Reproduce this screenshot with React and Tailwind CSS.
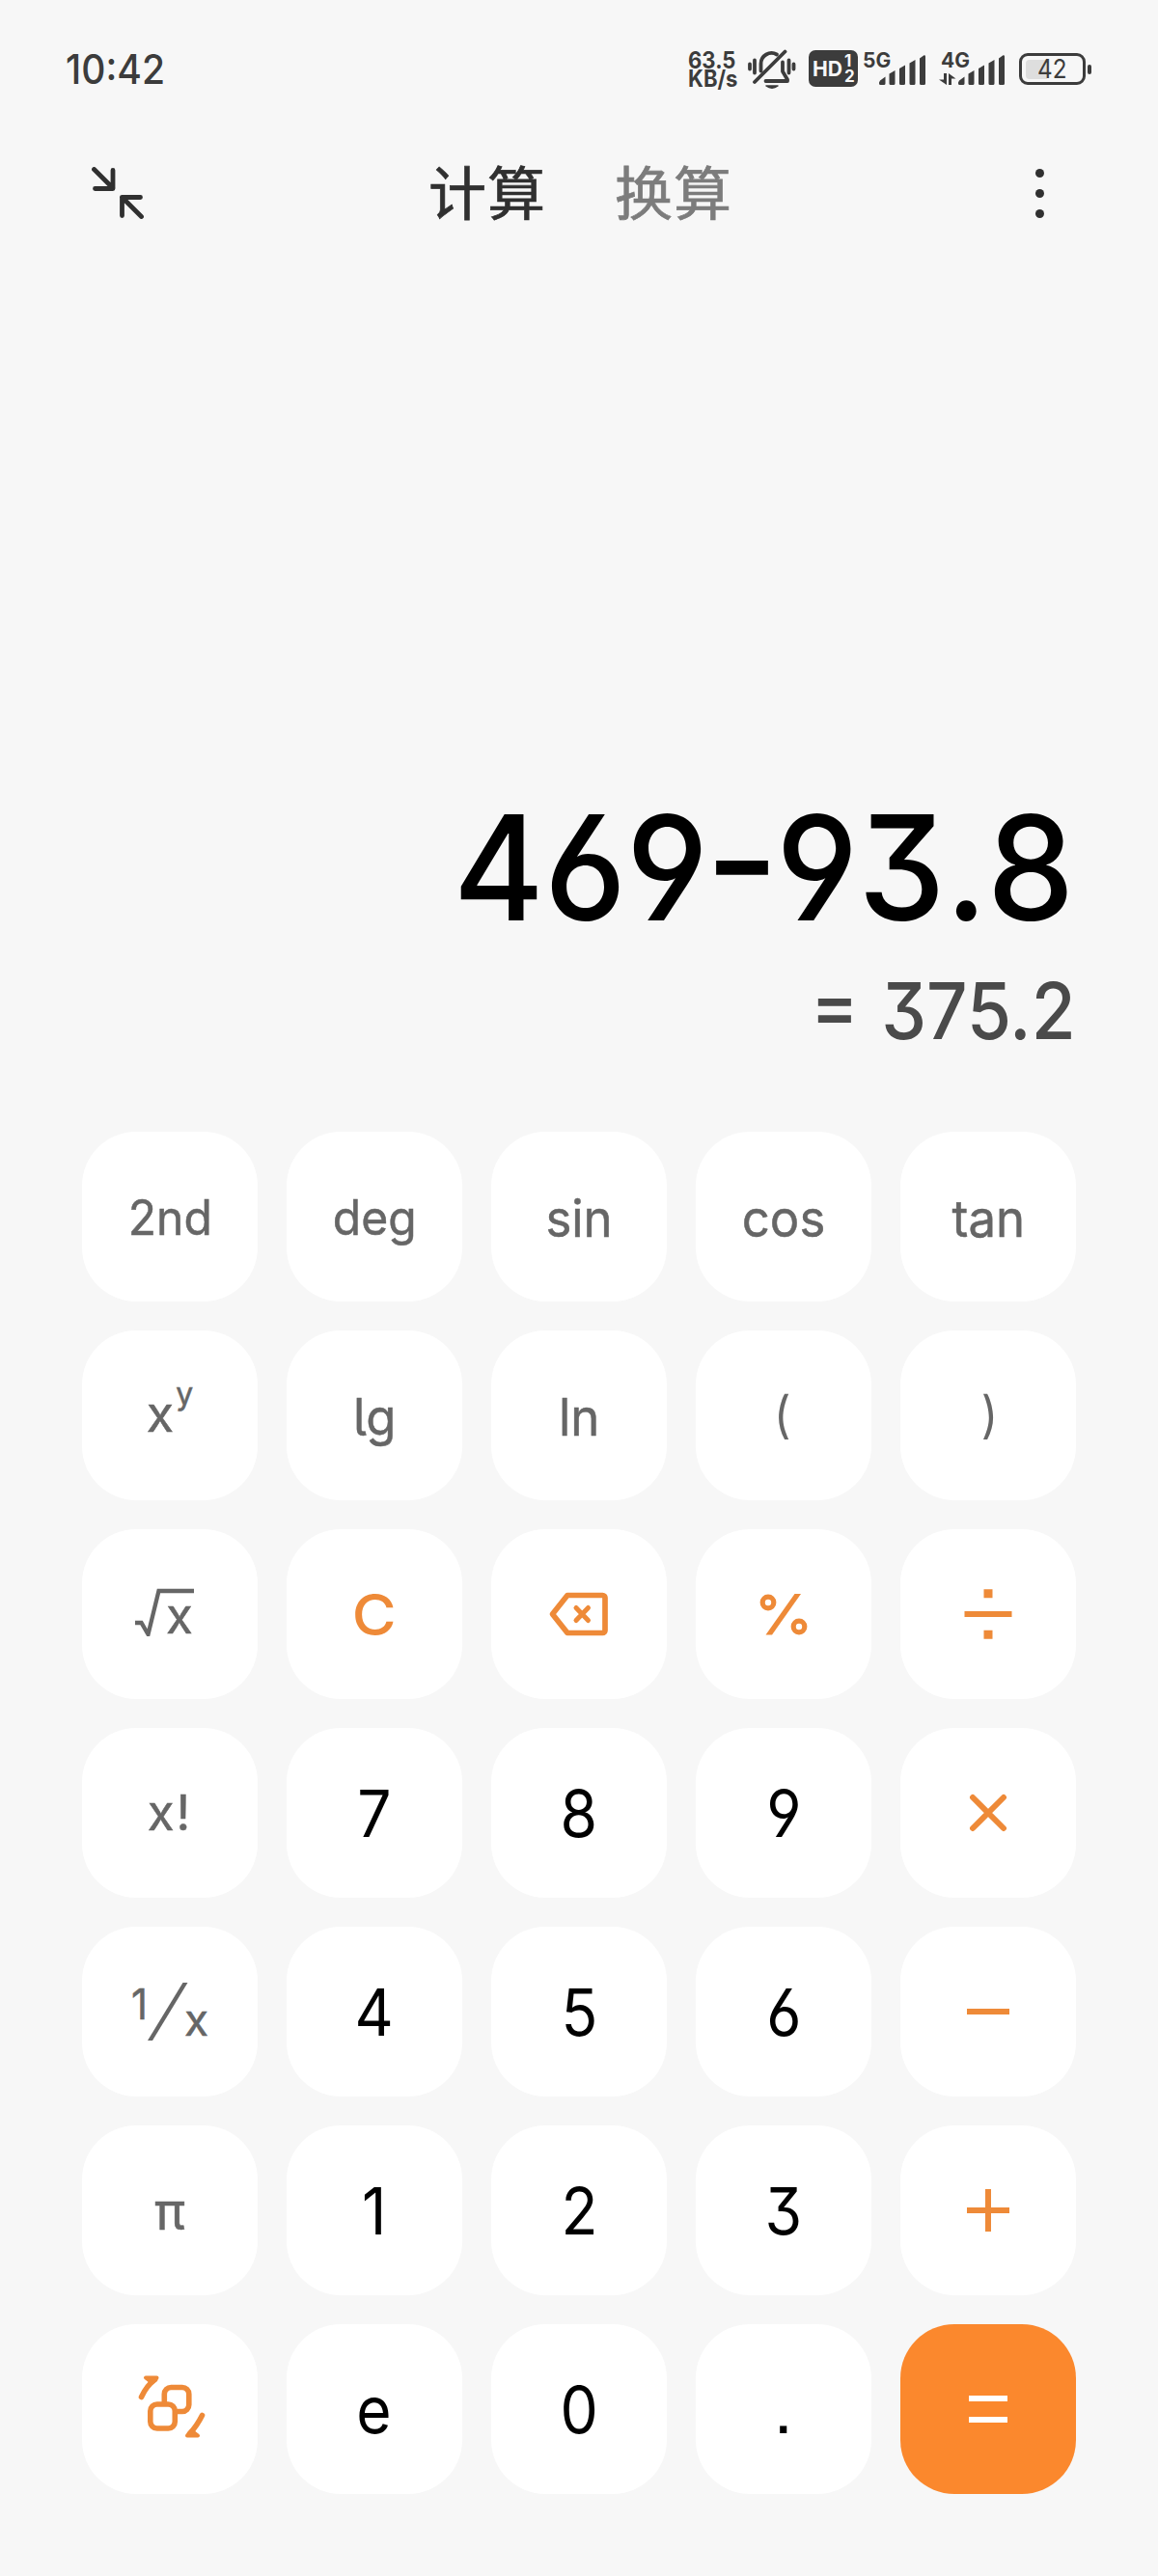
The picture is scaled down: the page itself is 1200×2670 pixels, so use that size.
import { useState } from "react";
import clsx from "clsx";

const SignalBars = ({ className }) => (
    <svg viewBox="0 0 48 32" className={className} fill="currentColor">
        <path d="M1 26.5 6.5 22.5V29.5a1.5 1.5 0 0 1-1.5 1.5H1.5A1.5 1.5 0 0 1 0 29.5V28.5Z" />
        <path d="M10.5 19.5 16.5 16V29.5a1.5 1.5 0 0 1-1.5 1.5h-3a1.5 1.5 0 0 1-1.5-1.5Z" />
        <path d="M21 14 27 10.5V29.5a1.5 1.5 0 0 1-1.5 1.5h-3a1.5 1.5 0 0 1-1.5-1.5Z" />
        <path d="M31.5 8.5 37.5 5V29.5a1.5 1.5 0 0 1-1.5 1.5h-3a1.5 1.5 0 0 1-1.5-1.5Z" />
        <path d="M42 3.5 46.5 0.3Q48 0 48 1.5V29.5a1.5 1.5 0 0 1-1.5 1.5h-3a1.5 1.5 0 0 1-1.5-1.5Z" />
    </svg>
);

const MutedBell = () => (
    <svg viewBox="0 0 50 42" className="h-[42px] w-[50px]" fill="none" stroke="currentColor" strokeWidth="3.8" strokeLinecap="round" strokeLinejoin="round">
        <path d="M2 15.5v5M7 11.5v13" />
        <path d="M42.5 11.5v13M47.5 15.5v5" />
        <path d="M13.5 22.5V15a11 11 0 0 1 16.5-9.5" />
        <path d="M36 13.5v9.5l5 8.5v1.5H18.5" />
        <path d="M7 34 38.5 2.5" />
        <path d="M19 38h12q-6 4.5-12 0Z" fill="currentColor" strokeWidth="1.5" />
    </svg>
);

const StatusBar = () => (
    <div className="flex h-[144px] items-start pt-[50px] pl-[68px] text-[#3c3c3c]">
        <span className="mt-[1px] w-[642px] origin-left scale-x-[0.93] text-[42px] leading-[42px] font-medium">10:42</span>

        <div className="ml-[3px] w-[61px] origin-left scale-x-[0.92] text-[24px] leading-[19px] font-bold">
            <div className="pt-[3px]">63.5</div>
            <div>KB/s</div>
        </div>
        <div className="mt-[1px] ml-[1px]">
            <MutedBell />
        </div>

        {/* HD badge for both SIMs */}
        <div className="mt-[2px] ml-[13px] flex h-[38px] w-[51px] items-center rounded-[7px] bg-[#3c3c3c] pl-[4px] text-[#f7f7f7]">
            <span className="w-[29px] origin-left scale-x-[0.96] text-[22px] leading-none font-bold">HD</span>
            <span className="flex flex-col pl-[4px] text-[17px] leading-[16px] font-bold">
                <span>1</span>
                <span>2</span>
            </span>
        </div>

        <div className="ml-[5px] flex w-[67px] items-start">
            <span className="w-[17px] pt-[1px] text-[21px] leading-[24px] font-bold">5G</span>
            <SignalBars className="mt-[6.5px] h-[32px] w-[48px] shrink-0" />
        </div>

        <div className="ml-[12px] flex w-[69px] items-start">
            <div className="flex w-[20px] flex-col">
                <span className="w-[30px] pt-[1px] pl-[2px] text-[21px] leading-[24px] font-bold">4G</span>
                <svg viewBox="0 0 18 12" className="mt-[1px] h-[12px] w-[18px]" fill="currentColor">
                    <path d="M5 0h3v12L0 6.5h5Z" />
                    <path d="M10 0l7.5 5.5H13V12h-3Z" />
                </svg>
            </div>
            <SignalBars className="mt-[6.5px] h-[32px] w-[48px] shrink-0" />
        </div>

        {/* Battery */}
        <div className="mt-[5px] ml-[14px] flex items-center gap-[2px]">
            <div className="flex h-[33px] w-[69px] items-center rounded-[9px] border-[3.5px] border-[#3c3c3c] p-[4px]">
                <div className="flex h-[20px] w-[22px] items-center rounded-l-[4px] bg-[#dedede] pl-[12px] text-[27px] leading-none">
                    <span className="origin-left scale-x-[0.9]">42</span>
                </div>
            </div>
            <div className="h-[10px] w-[4px] rounded-[2px] bg-[#3c3c3c]" />
        </div>
    </div>
);

const Header = ({ tab, setTab }) => (
    <div className="flex h-[112px] items-center pl-[95px] text-[#303030]">
        <button type="button" aria-label="collapse">
            <svg viewBox="0 0 54 54" className="size-[54px]" fill="none" stroke="currentColor" strokeWidth="4.8" strokeLinecap="round" strokeLinejoin="round">
                <path d="M2.5 2.5 22 22M22 3.500V22.500H3.500" />
                <path d="M51.5 51.5 31.500 31.500M31.500 50.500V31.500H50.500" />
            </svg>
        </button>
        <div className="ml-[295px] flex w-[629px] gap-[71px] pt-[2px] text-[60px] leading-none tracking-[1px] [-webkit-text-stroke:0.7px]">
            {["计算", "换算"].map((name) => (
                <button
                    key={name}
                    type="button"
                    onClick={() => setTab(name)}
                    className={clsx(tab === name ? "text-[#303030]" : "text-[#7c7c7c]")}
                >
                    {name}
                </button>
            ))}
        </div>
        <button type="button" aria-label="more" className="flex flex-col gap-[12px]">
            <span className="size-[9px] rounded-full bg-[#303030]" />
            <span className="size-[9px] rounded-full bg-[#303030]" />
            <span className="size-[9px] rounded-full bg-[#303030]" />
        </button>
    </div>
);

const Icon = ({ children, className }) => (
    <svg viewBox="0 0 80 80" className={clsx("size-[80px]", className)} fill="none" stroke="currentColor" strokeWidth="6">
        {children}
    </svg>
);

const Digit = ({ children }) => (
    <span className="scale-x-[0.93] text-[67px] leading-none text-black">{children}</span>
);

const Fn = ({ children }) => (
    <span className="scale-x-[0.96] pt-[5px] text-[53px] leading-none [-webkit-text-stroke:0.5px]">{children}</span>
);

const SmallFn = ({ children }) => (
    <span className="scale-x-[0.96] pt-[2px] text-[50px] leading-none [-webkit-text-stroke:0.5px]">{children}</span>
);

const Power = () => (
    <span className="-mt-[17px] flex items-start text-[52px] leading-none [-webkit-text-stroke:0.5px]">
        <span className="pt-[15px]">x</span>
        <span className="pt-[4px] pl-[2px] text-[32px]">y</span>
    </span>
);

const Root = () => (
    <span className="mr-[17px] flex items-start pb-[2px]">
        <svg viewBox="0 0 62 50" className="-mr-[35px] mt-[2px] h-[50px] w-[62px]" fill="none" stroke="currentColor" strokeWidth="4.3">
            <path d="M0 36H6.500L13.500 48 24.500 3H61" />
        </svg>
        <span className="w-[28px] pt-[5px] pl-[5px] text-[51px] leading-none [-webkit-text-stroke:0.5px]">x</span>
    </span>
);

const Inverse = () => (
    <span className="flex items-start [-webkit-text-stroke:0.5px]">
        <span className="w-[17px] origin-left scale-x-[0.95] text-[44px] leading-none">1</span>
        <svg viewBox="0 0 42 60" className="h-[60px] w-[42px]" fill="currentColor">
            <path d="M0 60 36.500 0H41.500L5 60Z" />
        </svg>
        <span className="-ml-[4px] w-[25px] pt-[15px] text-[46px] leading-none">x</span>
    </span>
);

const Backspace = () => (
    <Icon>
        <path d="M12.500 40 28 20.500H64.500a2.500 2.500 0 0 1 2.500 2.500V57a2.500 2.500 0 0 1-2.500 2.500H28Z" strokeWidth="5.7" strokeLinejoin="round" />
        <path d="M37 33.500 49.500 46.500M49.500 33.500 37 46.500" strokeWidth="5" strokeLinecap="round" />
    </Icon>
);

const Percent = () => (
    <Icon>
        <circle cx="24" cy="28" r="5.8" strokeWidth="5.2" />
        <circle cx="56" cy="53" r="5.8" strokeWidth="5.2" />
        <path d="M21.500 61.500 51.500 19H58L28 61.500Z" fill="currentColor" stroke="none" />
    </Icon>
);

const Divide = () => (
    <Icon>
        <path d="M15.500 40H64.500" />
        <path d="M40 14.300V23.300M40 56.800V65.800" strokeWidth="9" />
    </Icon>
);

const Convert = () => (
    <Icon>
        <g strokeWidth="5.6" strokeLinecap="round" strokeLinejoin="round">
            <rect x="34.300" y="17.500" width="25.500" height="25" rx="7" />
            <rect x="19.800" y="35" width="25.500" height="25" rx="7" className="fill-white" />
            <path d="M10.500 27.500Q16 15.500 24.500 9.500" />
            <path d="M15 7.500H26.500L21.500 12.500Z" fill="currentColor" strokeWidth="4" />
            <path d="M73.500 46.500Q68 57.500 60.500 65.500" />
            <path d="M69 67.500H58L62.500 62.500Z" fill="currentColor" strokeWidth="4" />
        </g>
    </Icon>
);

const KEYS = [
    { id: "2nd", label: <SmallFn>2nd</SmallFn> },
    { id: "deg", label: <SmallFn>deg</SmallFn> },
    { id: "sin", label: <Fn>sin</Fn> },
    { id: "cos", label: <Fn>cos</Fn> },
    { id: "tan", label: <Fn>tan</Fn> },
    { id: "pow", label: <Power /> },
    { id: "lg", label: <Fn><span className="[font-feature-settings:'cv05']">lg</span></Fn> },
    { id: "ln", label: <Fn>ln</Fn> },
    { id: "(", label: <span className="scale-x-[0.92] pr-[4px] text-[52px] leading-none">(</span> },
    { id: ")", label: <span className="scale-x-[0.92] pl-[2px] text-[52px] leading-none">)</span> },
    { id: "sqrt", label: <Root /> },
    { id: "C", tone: "accent", label: <span className="scale-x-[1.06] text-[59px] leading-none font-medium">C</span> },
    { id: "del", tone: "accent", label: <Backspace /> },
    { id: "%", tone: "accent", label: <Percent /> },
    { id: "/", tone: "accent", label: <Divide /> },
    { id: "fact", label: <span className="pb-[2px] text-[51px] leading-none tracking-[2px] [-webkit-text-stroke:0.5px]">x!</span> },
    { id: "7", label: <Digit>7</Digit> },
    { id: "8", label: <Digit>8</Digit> },
    { id: "9", label: <Digit>9</Digit> },
    { id: "*", tone: "accent", label: <Icon><path d="M24 24 56 56M56 24 24 56" strokeLinecap="round" /></Icon> },
    { id: "inv", label: <Inverse /> },
    { id: "4", label: <Digit>4</Digit> },
    { id: "5", label: <Digit>5</Digit> },
    { id: "6", label: <Digit>6</Digit> },
    { id: "-", tone: "accent", label: <Icon><path d="M18 40H62" /></Icon> },
    { id: "pi", label: <span className="pt-[3px] text-[53px] leading-none [-webkit-text-stroke:0.5px]">π</span> },
    { id: "1", label: <Digit>1</Digit> },
    { id: "2", label: <Digit>2</Digit> },
    { id: "3", label: <Digit>3</Digit> },
    { id: "+", tone: "accent", label: <Icon><path d="M18 40H62M40 18V62" /></Icon> },
    { id: "convert", tone: "accent", label: <Convert /> },
    { id: "e", label: <Digit>e</Digit> },
    { id: "0", label: <Digit>0</Digit> },
    { id: ".", label: <Digit><span className="[font-feature-settings:'ss07']">.</span></Digit> },
    { id: "=", tone: "equals", label: <Icon><path d="M20 29H60M20 51H60" /></Icon> },
];

const Key = ({ label, tone }) => (
    <button
        type="button"
        className={clsx(
            "flex h-[176px] w-[182px] items-center justify-center rounded-[56px]",
            tone === "equals" ? "bg-[#fb882d] text-white" : "bg-white",
            tone === "accent" && "text-[#ee8a38]",
            !tone && "text-[#666666]"
        )}
    >
        {label}
    </button>
);

export default function App() {
    const [tab, setTab] = useState("计算");

    return (
        <div className="flex h-[2670px] w-[1200px] flex-col overflow-hidden bg-[#f7f7f7] font-['Inter','Noto_Sans_CJK_SC',sans-serif]">
            <StatusBar />
            <Header tab={tab} setTab={setTab} />

            {/* Expression and result */}
            <div className="flex h-[917px] flex-col items-end justify-end pr-[85px] pb-[84px] [font-feature-settings:'cv03','cv04','cv09','case']">
                <div className="mr-[2px] origin-right scale-x-[0.95] text-[151px] leading-[151px] font-medium text-black [font-kerning:none]">
                    469<span className="mx-[2px] inline-block scale-x-[1.16] scale-y-[1.05]">-</span>93.8
                </div>
                <div className="mt-[33px] origin-right scale-x-[0.92] text-[81px] leading-[81px] font-medium text-[#4a4a4a] [word-spacing:4px]">= 375.2</div>
            </div>

            {/* Keypad */}
            <div className="grid grid-cols-[repeat(5,182px)] justify-center gap-[30px] [font-feature-settings:'cv03','cv04','cv09']">
                {KEYS.map((k) => (
                    <Key key={k.id} label={k.label} tone={k.tone} />
                ))}
            </div>
        </div>
    );
}
